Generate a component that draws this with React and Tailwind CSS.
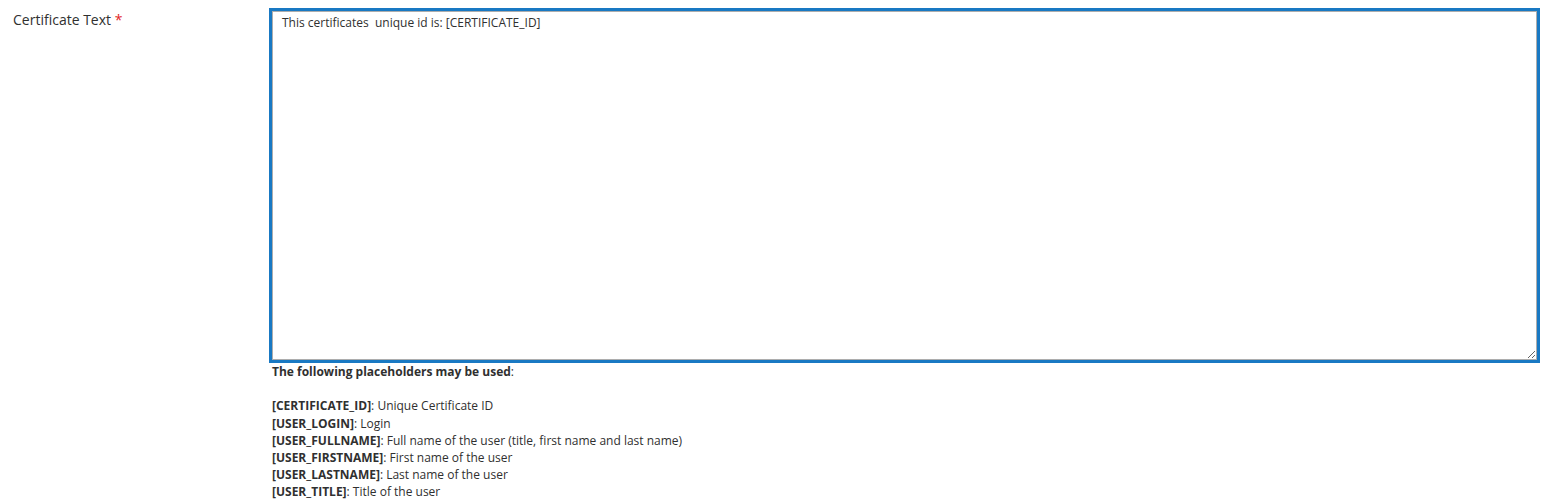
import { useState } from "react";

const placeholders = [
  ["[CERTIFICATE_ID]", "Unique Certificate ID"],
  ["[USER_LOGIN]", "Login"],
  ["[USER_FULLNAME]", "Full name of the user (title, first name and last name)"],
  ["[USER_FIRSTNAME]", "First name of the user"],
  ["[USER_LASTNAME]", "Last name of the user"],
  ["[USER_TITLE]", "Title of the user"],
];

const App = () => {
  const [text, setText] = useState("This certificates  unique id is: [CERTIFICATE_ID]");

  return (
    <div
      className="min-h-screen bg-white text-[#303030] flex"
      style={{ fontFamily: "'Open Sans', 'Noto Sans', sans-serif" }}
    >
      <div className="w-[269px] shrink-0 pl-[13px] pt-[10px] text-[14px] leading-[19px]">
        Certificate Text <span className="text-[#e22626]">*</span>
      </div>
      <div className="flex-1 pr-[10px] pt-[8px]">
        <div className="border-[3px] border-[#1979c3]">
          <textarea
            className="block w-full h-[349px] border border-[#adadad] pl-[9px] pr-[10px] pt-[2px] pb-[6px] text-[12px] leading-[17px] text-[#303030] outline-none resize-y"
            value={text}
            onChange={(e) => setText(e.target.value)}
          />
        </div>
        <div className="pl-[3px] text-[12px] leading-[17.2px] text-[#303030]">
          <p className="font-bold">
            The following placeholders may be used<span className="font-normal">:</span>
          </p>
          <div className="h-[17.2px]" />
          {placeholders.map(([key, desc]) => (
            <p key={key}>
              <span className="font-bold">{key}</span>: {desc}
            </p>
          ))}
        </div>
      </div>
    </div>
  );
};

export default App;
